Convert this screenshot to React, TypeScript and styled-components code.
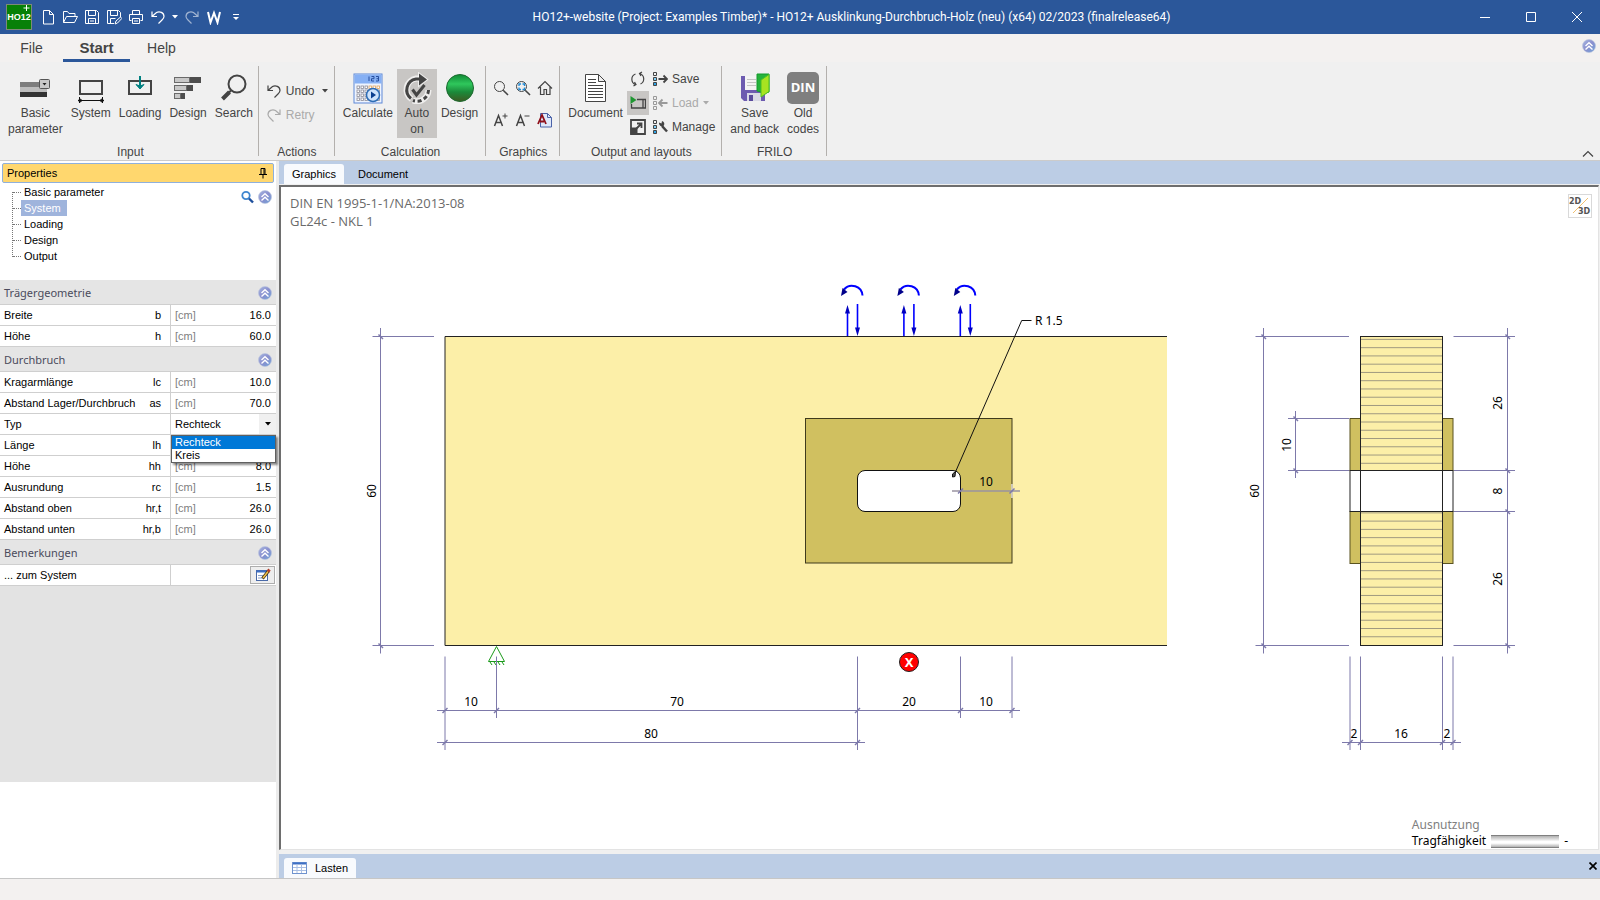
import React from "react";
import styled, { createGlobalStyle } from "styled-components";

const RIBBON_FONT = `"Liberation Sans", Arial, sans-serif`;
const HUMAN_FONT = `"Noto Sans", "Open Sans", sans-serif`;

const Global = createGlobalStyle`
  *, *::before, *::after { box-sizing: border-box; }
  body { margin: 0; background: #f0f0f0; font: 12px/16px ${RIBBON_FONT}; color: #444; }
  button, input, select { font: inherit; color: inherit; margin: 0; padding: 0; border: 0; background: none; }
  svg { display: block; flex: none; }
`;

/* ---------- window frame ---------- */
const Page = styled.div`
  display: flex;
  flex-direction: column;
  min-height: 100vh;
`;
const TitleBar = styled.header`
  display: flex;
  align-items: center;
  height: 34px;
  background: #2b579a;
  color: #fff;
`;
const Logo = styled.div`
  margin-left: 6px;
  width: 26px;
  height: 26px;
`;
const QuickTools = styled.div`
  display: flex;
  flex: none;
  align-items: center;
  padding: 0 12px 0 5px;
`;
const QuickButton = styled.button<{ $narrow?: boolean; $faded?: boolean }>`
  display: flex;
  align-items: center;
  justify-content: center;
  width: ${(p) => (p.$narrow ? 12 : 22)}px;
  height: 24px;
  opacity: ${(p) => (p.$faded ? 0.55 : 1)};
`;
const WindowTitle = styled.h1`
  flex: 1;
  margin: 0;
  padding-right: 18px;
  text-align: center;
  font: 12px/16px Roboto, sans-serif;
  white-space: nowrap;
`;
const WindowButton = styled.button`
  display: flex;
  align-items: center;
  justify-content: center;
  width: 46px;
  height: 34px;
`;

/* ---------- ribbon ---------- */
const RibbonTabs = styled.nav`
  display: flex;
  height: 28px;
  background: #f3f1f0;
`;
const RibbonTab = styled.button<{ $active?: boolean }>`
  width: ${(p) => (p.$active ? 67 : 63)}px;
  height: 28px;
  padding-top: 2px;
  font-size: ${(p) => (p.$active ? 15 : 14)}px;
  font-weight: ${(p) => (p.$active ? 700 : 400)};
  border-bottom: 3px solid ${(p) => (p.$active ? "#2b579a" : "transparent")};
`;
const TabsEnd = styled.div`
  display: flex;
  align-items: center;
  margin-left: auto;
  padding: 0 4px 4px 0;
`;
const Ribbon = styled.div`
  display: flex;
  height: 99px;
  border-bottom: 1px solid #cccbca;
  background: #f0f0f0;
`;
const Group = styled.section<{ $tight?: boolean }>`
  display: flex;
  flex-direction: column;
  justify-content: space-between;
  padding: 5px ${(p) => (p.$tight ? 2 : 4)}px 0 4px;
  position: relative;
  &::after {
    content: "";
    position: absolute;
    right: 0;
    top: 4px;
    bottom: 4px;
    width: 1px;
    background: #b3b0ad;
  }
`;
const GroupBody = styled.div`
  display: flex;
`;
const GroupLabel = styled.div`
  text-align: center;
`;
const BigButton = styled.button<{ $on?: boolean }>`
  display: flex;
  flex-direction: column;
  align-items: center;
  min-width: 38px;
  height: 69px;
  margin-top: 2px;
  padding: 3px 4px 0;
  background: ${(p) => (p.$on ? "#c8c6c4" : "none")};
  white-space: pre-line;
  line-height: 16px;
  svg { margin-bottom: 1px; }
`;
const SmallColumn = styled.div<{ $top?: number }>`
  display: flex;
  flex-direction: column;
  padding-top: ${(p) => p.$top ?? 0}px;
`;
const SmallButton = styled.button<{ $faded?: boolean; $on?: boolean }>`
  display: flex;
  align-items: center;
  gap: 4px;
  height: 24px;
  padding: 0 3px;
  color: ${(p) => (p.$faded ? "#aaa" : "inherit")};
  background: ${(p) => (p.$on ? "#c8c6c4" : "none")};
`;
const IconGrid = styled.div`
  display: grid;
  grid-template-columns: repeat(3, 22px);
  grid-auto-rows: 32px;
  padding-top: 5px;
`;
const IconButton = styled.button`
  display: flex;
  align-items: center;
  justify-content: center;
`;
const RibbonEnd = styled.div`
  display: flex;
  align-items: flex-end;
  margin-left: auto;
  padding-right: 6px;
`;

/* ---------- property panel ---------- */
const Main = styled.main`
  display: flex;
  flex: 1;
`;
const Side = styled.aside`
  flex: none;
  width: 279px;
  background: #fff;
  border-right: 3px solid #ececec;
  font: 11px/16px ${RIBBON_FONT};
  color: #000;
`;
const SideHead = styled.div`
  display: flex;
  align-items: center;
  justify-content: space-between;
  height: 20px;
  margin: 2px 2px 1px;
  padding: 0 6px 0 4px;
  border: 1px solid #8fb0dc;
  border-radius: 2px;
  background: #ffd76e;
`;
const TreeArea = styled.div`
  display: flex;
  align-items: flex-start;
  justify-content: space-between;
  height: 96px;
  padding: 0 4px 0 12px;
`;
const Tree = styled.ul`
  list-style: none;
  margin: 8px 0 0;
  padding: 0;
  height: 65px;
  border-left: 1px dotted #777;
  li:first-child { margin-top: -8px; }
`;
const TreeItem = styled.li<{ $selected?: boolean }>`
  display: flex;
  align-items: center;
  height: 16px;
  &::before {
    content: "";
    width: 8px;
    border-top: 1px dotted #777;
  }
  a {
    padding: 0 6px 0 3px;
    text-decoration: none;
    color: ${(p) => (p.$selected ? "#fff" : "#000")};
    background: ${(p) => (p.$selected ? "#9fb4dc" : "none")};
  }
`;
const TreeTools = styled.div`
  display: flex;
  gap: 4px;
  padding-top: 6px;
`;
const PlainButton = styled.button`
  display: flex;
  height: 14px;
`;
const PropertyTable = styled.table`
  width: 100%;
  table-layout: fixed;
  border-spacing: 0;
`;
const SectionCell = styled.th`
  height: 25px;
  padding: 2px 4px 0;
  border-bottom: 1px solid #cfcfcf;
  background: #e5e5e5;
  color: #4b4b5c;
  font: 11px/16px ${HUMAN_FONT};
  text-align: left;
`;
const SectionRow = styled.div`
  display: flex;
  align-items: center;
  justify-content: space-between;
`;
const NameCell = styled.th`
  width: 171px;
  height: 21px;
  padding: 0 9px 0 4px;
  border-right: 1px solid #cfcfcf;
  border-bottom: 1px solid #cfcfcf;
  font-weight: 400;
`;
const NameLabel = styled.label`
  display: flex;
  justify-content: space-between;
`;
const ValueCell = styled.td`
  position: relative;
  height: 21px;
  padding: 0 0 0 4px;
  border-bottom: 1px solid #cfcfcf;
`;
const ValueRow = styled.div`
  display: flex;
  align-items: center;
  justify-content: space-between;
  padding-right: 5px;
`;
const Unit = styled.span`
  color: #808080;
`;
const ValueInput = styled.input`
  width: 60px;
  height: 18px;
  text-align: right;
`;
const TypeRow = styled.div`
  display: flex;
  height: 20px;
`;
const TypeSelect = styled.select`
  flex: 1;
  appearance: none;
  outline: none;
`;
const TypeArrow = styled.span`
  display: flex;
  align-items: center;
  justify-content: center;
  width: 17px;
  background: #f0f0f0;
`;
const TypeMenu = styled.ul`
  position: absolute;
  z-index: 2;
  left: 0;
  right: 0;
  top: calc(100% + 1px);
  margin: 0;
  padding: 0;
  list-style: none;
  line-height: 13px;
  background: #fff;
  border: 1px solid #606060;
  box-shadow: 2px 2px 2px rgba(0, 0, 0, 0.45);
`;
const TypeOption = styled.li<{ $active?: boolean }>`
  padding-left: 3px;
  color: ${(p) => (p.$active ? "#fff" : "#000")};
  background: ${(p) => (p.$active ? "#0078d7" : "#fff")};
`;
const NoteButton = styled.button`
  display: flex;
  align-items: center;
  justify-content: center;
  width: 25px;
  height: 18px;
  margin: 0 1px 0 auto;
  border: 1px solid #adadad;
  background: #eee;
`;
const SideFiller = styled.div`
  height: 196px;
  background: #e3e3e3;
`;

/* ---------- work area ---------- */
const Work = styled.div`
  display: flex;
  flex: 1;
  flex-direction: column;
  min-width: 0;
`;
const DocTabs = styled.div<{ $bottom?: boolean }>`
  display: flex;
  align-items: flex-end;
  height: ${(p) => (p.$bottom ? 24 : 23)}px;
  padding: 0 3px 0 5px;
  background: #bccde5;
  font: 11px/20px ${RIBBON_FONT};
  color: #000;
`;
const DocTab = styled.button<{ $active?: boolean }>`
  display: flex;
  align-items: center;
  gap: 8px;
  height: 20px;
  padding: 0 8px;
  margin-right: 6px;
  border-radius: 3px 3px 0 0;
  background: ${(p) => (p.$active ? "#f8fafd" : "none")};
`;
const CloseTab = styled.button`
  display: flex;
  margin: 0 0 8px auto;
`;
const Canvas = styled.div`
  position: relative;
  display: flex;
  flex: 1;
  margin: 1px 1px 4px 0;
  border-style: solid;
  border-width: 2px 1px 1px 2px;
  border-color: #6e6e6e #e3e3e3 #e3e3e3 #6e6e6e;
  background: #fff;
`;
const Drawing = styled.svg`
  flex: 1;
  min-width: 0;
  font: 12px ${HUMAN_FONT};
`;
const Norm = styled.div`
  position: absolute;
  left: 9px;
  top: 7px;
  font: 13px/18px "Open Sans", ${HUMAN_FONT};
  color: #6a6a6a;
`;
const ViewToggle = styled.button`
  position: absolute;
  right: 6px;
  top: 7px;
  width: 24px;
  height: 24px;
  border: 1px solid #d9d9d9;
`;
const Usage = styled.div`
  position: absolute;
  right: 30px;
  bottom: 0;
  font: 12px/16px ${HUMAN_FONT};
  color: #000;
`;
const UsageHead = styled.div`
  color: #808080;
`;
const UsageRow = styled.div`
  display: flex;
  align-items: center;
  gap: 5px;
`;
const UsageBar = styled.div`
  width: 68px;
  height: 13px;
  border: solid #808080;
  border-width: 1px 0;
  background: linear-gradient(#b0b0b0, #fff 50%, #fff 65%, #b0b0b0);
`;
const Status = styled.footer`
  height: 22px;
  border-top: 1px solid #c6c6c6;
  background: #f3f1f0;
`;

/* ---------- icons ---------- */
const I = ({ w = 16, h = 16, children }: { w?: number; h?: number; children: React.ReactNode }) => (
  <svg width={w} height={h} viewBox={`0 0 ${w} ${h}`} fill="none" stroke="currentColor" aria-hidden="true">
    {children}
  </svg>
);
const Caret = () => (
  <I w={6} h={4}><path d="M0 0h6L3 3.5z" fill="currentColor" stroke="none" /></I>
);
const UndoIcon = () => (
  <I><path d="M2 2.500v5h5M2.500 7L6.500 3.500C9.500 1.800 14 3.500 14 7.500C14 9 13 10 12 11L8.500 14.500" strokeWidth="1.2" /></I>
);
const RedoIcon = () => (
  <I><path d="M14 2.500v5h-5M13.500 7L9.500 3.500C6.500 1.800 2 3.500 2 7.500C2 9 3 10 4 11L7.500 14.500" strokeWidth="1.2" /></I>
);
const Collapse = () => (
  <I w={14} h={14}>
    <defs>
      <linearGradient id="orb" x1="0" y1="0" x2="1" y2="1">
        <stop offset="0" stopColor="#a6b6e0" />
        <stop offset="0.5" stopColor="#8a8fce" />
        <stop offset="1" stopColor="#6fa3d8" />
      </linearGradient>
    </defs>
    <circle cx="7" cy="7" r="6.500" fill="url(#orb)" stroke="#b9c3dd" strokeWidth="0.600" />
    <path d="M3.500 7L7 3.700L10.500 7M3.500 10.500L7 7.200L10.500 10.500" stroke="#fff" strokeWidth="1.400" />
  </I>
);
const Lens = ({ fit }: { fit?: boolean }) => (
  <I>
    <circle cx="6.500" cy="6.500" r="5" />
    <path d="M10.200 10.200L15 15" strokeWidth="1.600" />
    {fit && <path d="M4 6V4h2M7.500 4h2v2M9.500 7.500v2h-2M6 9.500H4v-2" stroke="#1e8ad6" strokeWidth="1.300" />}
  </I>
);
const ListMark = () => (
  <>
    <path d="M1.500 1.500h3v3h-3z" />
    <path d="M1.500 6.500h3v3h-3z" fill="#7fd0f7" />
    <path d="M1.500 11.500h3v3h-3z" fill="#2ea3e6" />
  </>
);

const BasicIcon = () => (
  <I w={32} h={32}>
    <g stroke="none">
      <path d="M1 10h27v5H1z" fill="#7d7d7d" />
      <path d="M1 15h27v5H1z" fill="#bdbdbd" />
      <path d="M1 20h27v5H1z" fill="#333" />
    </g>
    <rect x="20.500" y="7.500" width="10" height="9" rx="1" fill="#c9c9c9" stroke="#555" />
    <path d="M23.500 11h4l-2 2.500z" fill="#222" stroke="none" />
  </I>
);
const SystemIcon = () => (
  <I w={32} h={32}>
    <rect x="5" y="9" width="22" height="13" strokeWidth="2" />
    <path d="M3 28.500h26M4.500 25v6M27.500 25v6M3 28.500l3-1.500v3zM29 28.500l-3-1.500v3z" stroke="#111" />
  </I>
);
const LoadingIcon = () => (
  <I w={32} h={32}>
    <rect x="5" y="9" width="22" height="13" strokeWidth="2" />
    <path d="M16 4v10" stroke="#008080" strokeWidth="2" />
    <path d="M12 12.500l4 4.500 4-4.500-4 1.500z" fill="#008080" stroke="#008080" />
  </I>
);
const DesignIcon = () => (
  <I w={32} h={32}>
    {[[5, 27, 15], [13, 19, 12], [21, 11, 6]].map(([y, w, s]) => (
      <g key={y}>
        <rect x="2" y={y} width={w} height="6" fill="#4d4d4d" stroke="none" />
        <rect x="2.500" y={y + 0.5} width={s} height="5" fill="#c8c8c8" stroke="#6a6a6a" />
      </g>
    ))}
  </I>
);
const SearchIcon = () => (
  <I w={32} h={32}>
    <circle cx="19" cy="12" r="8.500" strokeWidth="2" />
    <path d="M13 18.500L10.500 21" strokeWidth="2" />
    <path d="M11.500 20L4.500 27" strokeWidth="4" />
  </I>
);
const CalculateIcon = () => (
  <I w={32} h={32}>
    <rect x="2" y="2" width="28" height="29" fill="#eef4ff" stroke="#5c87d6" />
    <rect x="2.500" y="2.500" width="27" height="9" fill="#86b0f4" stroke="none" />
    <path d="M17 4.500v4.500M19.500 4.500h2.500v2.200h-2.500v2.300h2.500M24 4.500h2.500v4.500H24M24.500 6.700h2" stroke="#274f9e" />
    {[14, 18, 22, 26].map((y) => [5, 9, 13, 17, 21, 25].map((x) => (
      <rect key={`${x}-${y}`} x={x} y={y} width="2.500" height="2.500" stroke={x > 16 && y < 18 ? "#e0a35a" : "#8a8a96"} strokeWidth="0.800" fill="#fff" />
    )))}
    <circle cx="21" cy="23" r="6.500" fill="#cfe3fb" stroke="#2d6cb5" strokeWidth="1.500" />
    <path d="M19 19.500l5 3.500-5 3.500z" fill="#0b3f8f" stroke="none" />
  </I>
);
const AutoIcon = () => (
  <I w={32} h={32}>
    <g stroke="#fff" strokeOpacity="0.700">
      <path d="M10.500 27A11.300 11.300 0 0 1 15 6.500h5" strokeWidth="6" />
      <path d="M27.500 18a11.500 11.500 0 0 1-15.500 10.500" strokeWidth="6" />
      <path d="M18 1.500l8 6-8 6z" strokeWidth="2" />
    </g>
    <path d="M10 26.500A11 11 0 0 1 15 7h5" strokeWidth="3" />
    <path d="M18 1.500l8 6-8 6z" fill="currentColor" stroke="none" />
    <path d="M11.500 17.500l4 5.500 8-10" strokeWidth="3" />
    <path d="M27.500 18a11.500 11.500 0 0 1-15.500 10.500" strokeWidth="3" strokeDasharray="4 2.500" />
  </I>
);
const GreenIcon = () => (
  <I w={32} h={32}>
    <defs>
      <linearGradient id="ball" x1="0" y1="0" x2="0" y2="1">
        <stop offset="0" stopColor="#0f8a34" />
        <stop offset="0.350" stopColor="#2fc75c" />
        <stop offset="0.650" stopColor="#1b8a3a" />
        <stop offset="1" stopColor="#3d5a22" />
      </linearGradient>
    </defs>
    <circle cx="16" cy="16" r="13.500" fill="url(#ball)" stroke="#1c6a30" />
  </I>
);
const DocumentIcon = () => (
  <I w={32} h={32}>
    <path d="M5.500 2.500h13l7 7v20h-20zM18.500 2.500v7h7" fill="#fff" />
    <path d="M8 7.500h8M8 10.500h8M8 13.500h15M8 16.500h15M8 19.500h15M8 22.500h15M8 25.500h15" />
  </I>
);
const SaveBackIcon = () => (
  <I w={32} h={32}>
    <path d="M2 4h24v25H5l-3-3z" fill="#6d5bb0" stroke="none" />
    <path d="M6 4h14v14H6z" fill="#f4f4f4" stroke="none" />
    <path d="M8 7.500h9M8 10.500h9M8 13.500h9" stroke="#c4c4c4" />
    <path d="M8 21h14v8H8z" fill="#d9d9e6" stroke="none" />
    <path d="M10 23h4v6h-4z" fill="#5a4a9c" stroke="none" />
    <path d="M18 2h12v18l-4 1-8-2z" fill="#25b33c" stroke="#159a2d" />
    <path d="M22 8l8-5.500v17L22 25z" fill="#a8e321" stroke="#4cbf23" />
  </I>
);
const DinIcon = () => (
  <I w={32} h={32}>
    <rect x="0" y="0" width="32" height="32" rx="5" fill="#7f7f7f" stroke="none" />
    <text x="16" y="20" textAnchor="middle" fill="#fff" stroke="none" fontSize="13" fontWeight="700" fontFamily="Open Sans">DIN</text>
  </I>
);

/* ---------- drawing ---------- */
const DIM = "#7d79aa";

const Tick = ({ x, y, flip }: { x: number; y: number; flip?: boolean }) => (
  <path d={flip ? `M${x - 2} ${y - 2}l4.500 4.500` : `M${x - 2.5} ${y + 2.5}l5-5`} strokeWidth="1.500" />
);
const HDim = ({ y, from, to, at }: { y: number; from: number; to: number; at: number[] }) => (
  <g stroke={DIM}>
    <path d={`M${from} ${y}H${to}`} />
    {at.map((x) => <Tick key={x} x={x} y={y} />)}
  </g>
);
const VDim = ({ x, from, to, at }: { x: number; from: number; to: number; at: number[] }) => (
  <g stroke={DIM}>
    <path d={`M${x} ${from}V${to}`} />
    {at.map((y) => <Tick key={y} x={x} y={y} flip />)}
  </g>
);
const VText = ({ x, y, children }: { x: number; y: number; children: string }) => (
  <text transform={`translate(${x} ${y}) rotate(-90)`} textAnchor="middle">{children}</text>
);
const LoadMark = ({ x }: { x: number }) => (
  <g transform={`translate(${x} 0)`} stroke="#0000ff" fill="none">
    <path d="M862.500 295.500A10.500 10.500 0 0 0 844 289.500" strokeWidth="2" />
    <path d="M841 296l1.500-8 5 4z" fill="#00008b" stroke="none" />
    <path d="M847.500 336V310M857.500 304v26" strokeWidth="1.600" />
    <path d="M847.500 305l2.500 8.500h-5zM857.500 336l2.500-8.500h-5z" fill="#0000c0" stroke="none" />
  </g>
);
const laminae = Array.from({ length: 37 }, (_, k) => k).filter((k) => k < 16 || k > 20).map((k) => 339.4 + 8.26 * k);

const Plan = () => (
  <Drawing viewBox="281 187 1317 662" preserveAspectRatio="xMidYMid meet" role="img" aria-label="Ansicht und Querschnitt">
    {/* side elevation */}
    <path d="M445 336.500H1167V645.500H445z" fill="#fcefa8" />
    <path d="M1167 336.500H445V645.500H1167" fill="none" stroke="#222" />
    <rect x="805.500" y="418.500" width="206.500" height="144.500" fill="#d0c060" stroke="#3f3a1c" />
    <rect x="857.500" y="470.500" width="103" height="41" rx="7.500" fill="#fff" stroke="#111" />
    <path d="M1012 484v14" stroke="#cfc9b8" strokeWidth="2" />
    <path d="M952 491h68" stroke="#9a93a0" strokeOpacity="0.750" strokeWidth="2" />
    <g stroke={DIM}><Tick x={960.5} y={491} /><Tick x={1012} y={491} /></g>
    <LoadMark x={0} /><LoadMark x={56.4} /><LoadMark x={112.8} />
    <path d="M1031.500 320.500H1021.700L955 473" fill="none" stroke="#111" />
    <path d="M952.500 477l0-3 3-2.500-0.500 5z" fill="#555" stroke="#111" />
    {/* support */}
    <path d="M496.500 646.500l8 15h-16zM490 662l2 3M494 662l2 3M498 662l2 3M502 662l2 3" fill="none" stroke="#1a9a1a" />
    {/* error marker */}
    <circle cx="909" cy="662" r="9.500" fill="#f00" stroke="#222" />
    <text x="909" y="666.500" textAnchor="middle" fill="#fff" fontWeight="700" fontSize="13">X</text>

    {/* section */}
    <g stroke="#5a5320" fill="#d0c060">
      <rect x="1350" y="418.500" width="10.500" height="52" />
      <rect x="1350" y="511.500" width="10.500" height="52" />
      <rect x="1442.500" y="418.500" width="10.500" height="52" />
      <rect x="1442.500" y="511.500" width="10.500" height="52" />
    </g>
    <rect x="1360.500" y="336.500" width="82" height="309" fill="#fcefa8" stroke="none" />
    <path d={laminae.map((y) => `M1361 ${y}H1442`).join("")} stroke="#a09a80" />
    <rect x="1350" y="470.500" width="103" height="41" fill="#fff" stroke="#222" />
    <rect x="1360.500" y="336.500" width="82" height="309" fill="none" stroke="#222" />

    {/* extension lines */}
    <g stroke={DIM} fill="none">
      <path d="M372.500 336.500H434M372.500 645.500H434" />
      <path d="M445 656.500V750M496.500 656.500V718M857.500 656.500V750M960.500 656.500V718M1012 656.500V718" />
      <path d="M1255.500 336.500H1349M1255.500 645.500H1349M1288 418.500H1349M1288 470.500H1349" />
      <path d="M1453.500 336.500H1515M1453.500 645.500H1515M1454 470.500H1515M1454 511.500H1515" />
      <path d="M1350 656.500V750M1360.500 656.500V750M1442.500 656.500V750M1453 656.500V750" />
    </g>
    <VDim x={380.5} from={328} to={653.5} at={[336.5, 645.5]} />
    <HDim y={710.5} from={437} to={1020} at={[445, 496.5, 857.5, 960.5, 1012]} />
    <HDim y={742.5} from={437} to={865} at={[445, 857.5]} />
    <VDim x={1263.5} from={328} to={653.5} at={[336.5, 645.5]} />
    <VDim x={1295.5} from={411} to={478} at={[418.5, 470.5]} />
    <VDim x={1507.5} from={328} to={653.5} at={[336.5, 470.5, 511.5, 645.5]} />
    <HDim y={742.5} from={1342} to={1461} at={[1350, 1360.5, 1442.5, 1453]} />

    <g fill="#000" textAnchor="middle">
      <text x="471" y="706">10</text>
      <text x="677" y="706">70</text>
      <text x="909" y="706">20</text>
      <text x="986" y="706">10</text>
      <text x="651" y="738">80</text>
      <text x="986" y="486">10</text>
      <text x="1354" y="738">2</text>
      <text x="1401" y="738">16</text>
      <text x="1447" y="738">2</text>
      <VText x={376} y={491}>60</VText>
      <VText x={1259} y={491}>60</VText>
      <VText x={1291} y={445}>10</VText>
      <VText x={1502} y={403}>26</VText>
      <VText x={1502} y={491}>8</VText>
      <VText x={1502} y={579}>26</VText>
    </g>
    <text x="1035" y="325" fill="#000">R 1.5</text>
  </Drawing>
);

/* ---------- table parts ---------- */
const Section = ({ title }: { title: string }) => (
  <tr>
    <SectionCell colSpan={2} scope="colgroup">
      <SectionRow>{title}<PlainButton aria-label={`${title} einklappen`}><Collapse /></PlainButton></SectionRow>
    </SectionCell>
  </tr>
);
const Name = ({ id, name, sym }: { id: string; name: string; sym?: string }) => (
  <NameCell scope="row"><NameLabel htmlFor={id}><span>{name}</span>{sym && <span>{sym}</span>}</NameLabel></NameCell>
);
const Prop = ({ name, sym, value }: { name: string; sym: string; value: string }) => (
  <tr>
    <Name id={`p-${sym}`} name={name} sym={sym} />
    <ValueCell>
      <ValueRow>{value && <Unit>[cm]</Unit>}<ValueInput id={`p-${sym}`} defaultValue={value} /></ValueRow>
    </ValueCell>
  </tr>
);

export default function App() {
  return (
    <Page>
      <Global />
      <TitleBar>
        <Logo>
          <I w={26} h={26}>
            <rect x="0.500" y="0.500" width="25" height="25" fill="#078007" stroke="#7d8a78" />
            <text x="13" y="16" textAnchor="middle" fill="#fff" stroke="none" fontSize="9" fontWeight="700">HO12</text>
            <path d="M20.500 1v6M17.500 4h6" stroke="#fff" />
          </I>
        </Logo>
        <QuickTools>
          <QuickButton aria-label="New"><I><path d="M3.500 1.500h6l4 4v9.500h-10zM9.500 1.500v4h4" /></I></QuickButton>
          <QuickButton aria-label="Open"><I><path d="M1.500 13.500v-11h4l1.500 2h6v3M1.500 13.500l3-6h11l-3 6z" /></I></QuickButton>
          <QuickButton aria-label="Save"><I><path d="M1.500 1.500h11l2 2v11h-13zM4.500 1.500v5h7v-5M4.500 14.500v-5h7v5M6 12h4" /></I></QuickButton>
          <QuickButton aria-label="Save as"><I><path d="M8 14.500H1.500v-13h11l2 2V8M4.500 1.500v5h7v-5M4.500 14.500v-5h5M9 15l1-3 4.500-4 1.300 1.500L11.500 14z" /></I></QuickButton>
          <QuickButton aria-label="Print"><I><path d="M4.500 5.500v-4h7v4M3.500 11.500h-2v-6h13v6h-2M4.500 9.500h7v5h-7zM6 12h4" /></I></QuickButton>
          <QuickButton aria-label="Undo"><UndoIcon /></QuickButton>
          <QuickButton aria-label="Undo list" $narrow><Caret /></QuickButton>
          <QuickButton aria-label="Redo" $faded><RedoIcon /></QuickButton>
          <QuickButton aria-label="Word"><I><path d="M2 3l2.500 10.500L8 4l3.500 9.500L14 3" strokeWidth="2" /></I></QuickButton>
          <QuickButton aria-label="Customize"><I w={8} h={8}><path d="M1 1.500h6" /><path d="M1 4h6L4 7z" fill="currentColor" stroke="none" /></I></QuickButton>
        </QuickTools>
        <WindowTitle>HO12+-website (Project: Examples Timber)* - HO12+ Ausklinkung-Durchbruch-Holz (neu) (x64) 02/2023 (finalrelease64)</WindowTitle>
        <WindowButton aria-label="Minimize"><I w={10} h={10}><path d="M0 5.500h10" /></I></WindowButton>
        <WindowButton aria-label="Maximize"><I w={10} h={10}><path d="M0.500 0.500h9v9h-9z" /></I></WindowButton>
        <WindowButton aria-label="Close"><I w={10} h={10}><path d="M0 0l10 10M10 0L0 10" /></I></WindowButton>
      </TitleBar>

      <RibbonTabs>
        <RibbonTab>File</RibbonTab>
        <RibbonTab $active>Start</RibbonTab>
        <RibbonTab>Help</RibbonTab>
        <TabsEnd><PlainButton aria-label="Collapse"><Collapse /></PlainButton></TabsEnd>
      </RibbonTabs>

      <Ribbon>
        <Group $tight>
          <GroupBody>
            <BigButton><BasicIcon />{"Basic\nparameter"}</BigButton>
            <BigButton><SystemIcon />System</BigButton>
            <BigButton><LoadingIcon />Loading</BigButton>
            <BigButton><DesignIcon />Design</BigButton>
            <BigButton><SearchIcon />Search</BigButton>
          </GroupBody>
          <GroupLabel>Input</GroupLabel>
        </Group>
        <Group>
          <SmallColumn $top={12}>
            <SmallButton><UndoIcon />Undo&nbsp;<Caret /></SmallButton>
            <SmallButton $faded disabled><RedoIcon />Retry</SmallButton>
          </SmallColumn>
          <GroupLabel>Actions</GroupLabel>
        </Group>
        <Group>
          <GroupBody>
            <BigButton><CalculateIcon />Calculate</BigButton>
            <BigButton $on><AutoIcon />{"Auto\non"}</BigButton>
            <BigButton><GreenIcon />Design</BigButton>
          </GroupBody>
          <GroupLabel>Calculation</GroupLabel>
        </Group>
        <Group>
          <IconGrid>
            <IconButton aria-label="Zoom"><Lens /></IconButton>
            <IconButton aria-label="Zoom to fit"><Lens fit /></IconButton>
            <IconButton aria-label="Home"><I><path d="M1 8.500L8 1.500l7 7M3.500 7v7.500h3.500v-5h2.500v5h3.500V7" strokeWidth="1.200" /></I></IconButton>
            <IconButton aria-label="Larger text"><I><path d="M1.500 14L5.500 3.500L9.500 14M3 10.500h5" strokeWidth="1.500" /><path d="M9.500 4h5M12 1.500v5" /></I></IconButton>
            <IconButton aria-label="Smaller text"><I><path d="M1.500 14L5.500 3.500L9.500 14M3 10.500h5" strokeWidth="1.500" /><path d="M9.500 4h5" /></I></IconButton>
            <IconButton aria-label="Font"><I><path d="M3.500 1.500h7l4 4v9.500h-11z" fill="#dfe8fa" stroke="#4a62a8" /><path d="M10.500 1.500v4h4" stroke="#4a62a8" /><path d="M1 12L5 3l4 9M3 9.500h4" stroke="#8f0f1a" strokeWidth="1.800" /></I></IconButton>
          </IconGrid>
          <GroupLabel>Graphics</GroupLabel>
        </Group>
        <Group>
          <GroupBody>
            <BigButton><DocumentIcon />Document</BigButton>
            <SmallColumn>
              <SmallButton aria-label="Refresh"><I><path d="M9.500 2.500A5.600 5.600 0 0 1 10.500 13M5.500 13.500A5.600 5.600 0 0 1 5.500 3M12 1L9.500 2.500L11 5M3.500 15L6 13.500L4.500 11" strokeWidth="1.200" /></I></SmallButton>
              <SmallButton aria-label="Play" $on><I><path d="M7 4.500h8.500v8.500H1.500V9M13 4.500V13" strokeWidth="1.300" /><path d="M0.500 1v8l6-4z" fill="#1f9632" stroke="none" /></I></SmallButton>
              <SmallButton aria-label="Expand"><I><path d="M1 1h14v14H1z" strokeWidth="1.800" /><path d="M1 9h6v6H1z" fill="currentColor" /><path d="M6 10l5-5M7 4.500h4.500V9" strokeWidth="1.800" /></I></SmallButton>
            </SmallColumn>
            <SmallColumn>
              <SmallButton><I><ListMark /><path d="M6.500 8h8M11.500 4.500L15 8l-3.500 3.500" strokeWidth="1.800" /></I>Save</SmallButton>
              <SmallButton $faded disabled><I><path d="M1.500 1.500h3v3h-3zM1.500 6.500h3v3h-3zM1.500 11.500h3v3h-3z" stroke="#999" /><path d="M7.500 8h8M10.500 4.500L7 8l3.500 3.500" stroke="#999" strokeWidth="1.800" /></I>Load <Caret /></SmallButton>
              <SmallButton><I><ListMark /><path d="M10 7l5 5.500" strokeWidth="2.500" /><path d="M7 3.500l2.500 1 0.500-2.500a3 3 0 0 1 1.500 5 3.200 3.200 0 0 1-4.500-3.500z" fill="currentColor" stroke="none" /></I>Manage</SmallButton>
            </SmallColumn>
          </GroupBody>
          <GroupLabel>Output and layouts</GroupLabel>
        </Group>
        <Group>
          <GroupBody>
            <BigButton><SaveBackIcon />{"Save\nand back"}</BigButton>
            <BigButton><DinIcon />{"Old\ncodes"}</BigButton>
          </GroupBody>
          <GroupLabel>FRILO</GroupLabel>
        </Group>
        <RibbonEnd><PlainButton aria-label="Collapse ribbon"><I w={12} h={14}><path d="M1 10.500L6 5.500l5 5" strokeWidth="1.200" /></I></PlainButton></RibbonEnd>
      </Ribbon>

      <Main>
        <Side>
          <SideHead>
            Properties
            <PlainButton aria-label="Pin"><I w={8} h={14}><path d="M2 2.500h4v6H2zM5 2.500v6M0 8.500h8M4 8.500v4" stroke="#000" /></I></PlainButton>
          </SideHead>
          <TreeArea>
            <Tree>
              <TreeItem><a href="#basic">Basic parameter</a></TreeItem>
              <TreeItem $selected><a href="#system">System</a></TreeItem>
              <TreeItem><a href="#loading">Loading</a></TreeItem>
              <TreeItem><a href="#design">Design</a></TreeItem>
              <TreeItem><a href="#output">Output</a></TreeItem>
            </Tree>
            <TreeTools>
              <PlainButton aria-label="Search"><I w={13} h={14}><circle cx="5" cy="5.500" r="3.700" stroke="#3f86cf" strokeWidth="1.800" /><path d="M8 8.500l4 4" stroke="#1d4f9c" strokeWidth="2.400" /></I></PlainButton>
              <PlainButton aria-label="Collapse all"><Collapse /></PlainButton>
            </TreeTools>
          </TreeArea>
          <PropertyTable>
            <colgroup><col width="171" /><col /></colgroup>
            <tbody>
              <Section title="Trägergeometrie" />
              <Prop name="Breite" sym="b" value="16.0" />
              <Prop name="Höhe" sym="h" value="60.0" />
              <Section title="Durchbruch" />
              <Prop name="Kragarmlänge" sym="lc" value="10.0" />
              <Prop name="Abstand Lager/Durchbruch" sym="as" value="70.0" />
              <tr>
                <Name id="p-type" name="Typ" />
                <ValueCell>
                  <TypeRow>
                    <TypeSelect id="p-type" defaultValue="Rechteck"><option>Rechteck</option><option>Kreis</option></TypeSelect>
                    <TypeArrow><Caret /></TypeArrow>
                  </TypeRow>
                  <TypeMenu role="listbox" aria-label="Typ">
                    <TypeOption role="option" aria-selected $active>Rechteck</TypeOption>
                    <TypeOption role="option" aria-selected={false}>Kreis</TypeOption>
                  </TypeMenu>
                </ValueCell>
              </tr>
              <Prop name="Länge" sym="lh" value="" />
              <Prop name="Höhe" sym="hh" value="8.0" />
              <Prop name="Ausrundung" sym="rc" value="1.5" />
              <Prop name="Abstand oben" sym="hr,t" value="26.0" />
              <Prop name="Abstand unten" sym="hr,b" value="26.0" />
              <Section title="Bemerkungen" />
              <tr>
                <Name id="p-note" name="... zum System" />
                <ValueCell>
                  <NoteButton id="p-note" aria-label="Bemerkung bearbeiten">
                    <I w={16} h={14}>
                      <rect x="1.500" y="2.500" width="11" height="10" fill="#fff" stroke="#4a6aa8" />
                      <path d="M1.500 3.500h11" stroke="#3d6fc4" strokeWidth="2" />
                      <path d="M3 7.500h5M3 10h4" stroke="#8aa0cc" />
                      <path d="M7.500 10.500L13.500 3" stroke="#3b2d12" strokeWidth="3" />
                      <path d="M8 10L13 3.500" stroke="#f0c04a" strokeWidth="1.600" />
                      <path d="M13 3.500L14.500 1.500" stroke="#b5402c" strokeWidth="3" />
                    </I>
                  </NoteButton>
                </ValueCell>
              </tr>
            </tbody>
          </PropertyTable>
          <SideFiller />
        </Side>

        <Work>
          <DocTabs>
            <DocTab $active>Graphics</DocTab>
            <DocTab>Document</DocTab>
          </DocTabs>
          <Canvas>
            <Plan />
            <Norm>DIN EN 1995-1-1/NA:2013-08<br />GL24c - NKL 1</Norm>
            <ViewToggle aria-label="2D / 3D">
              <I w={22} h={22}>
                <path d="M4 18L19 3" stroke="#f0c070" />
                <g fill="#555" stroke="none" fontSize="8" fontWeight="700" fontFamily="DejaVu Sans">
                  <text x="0" y="9">2D</text>
                  <text x="9" y="19">3D</text>
                </g>
              </I>
            </ViewToggle>
            <Usage>
              <UsageHead>Ausnutzung</UsageHead>
              <UsageRow>Tragfähigkeit<UsageBar /><span>-</span></UsageRow>
            </Usage>
          </Canvas>
          <DocTabs $bottom>
            <DocTab $active>
              <I w={15} h={14}>
                <rect x="0.500" y="1.500" width="14" height="11" fill="#fff" stroke="#6f93cf" />
                <path d="M1 2.500h13" stroke="#3d6fc4" strokeWidth="2" />
                <path d="M1 6.500h13M1 9.500h13M5 3v9M9.500 3v9" stroke="#a9bfe4" />
              </I>
              Lasten
            </DocTab>
            <CloseTab aria-label="Close"><I w={8} h={8}><path d="M0.500 0.500l7 7M7.500 0.500l-7 7" stroke="#000" strokeWidth="1.700" /></I></CloseTab>
          </DocTabs>
        </Work>
      </Main>
      <Status />
    </Page>
  );
}
